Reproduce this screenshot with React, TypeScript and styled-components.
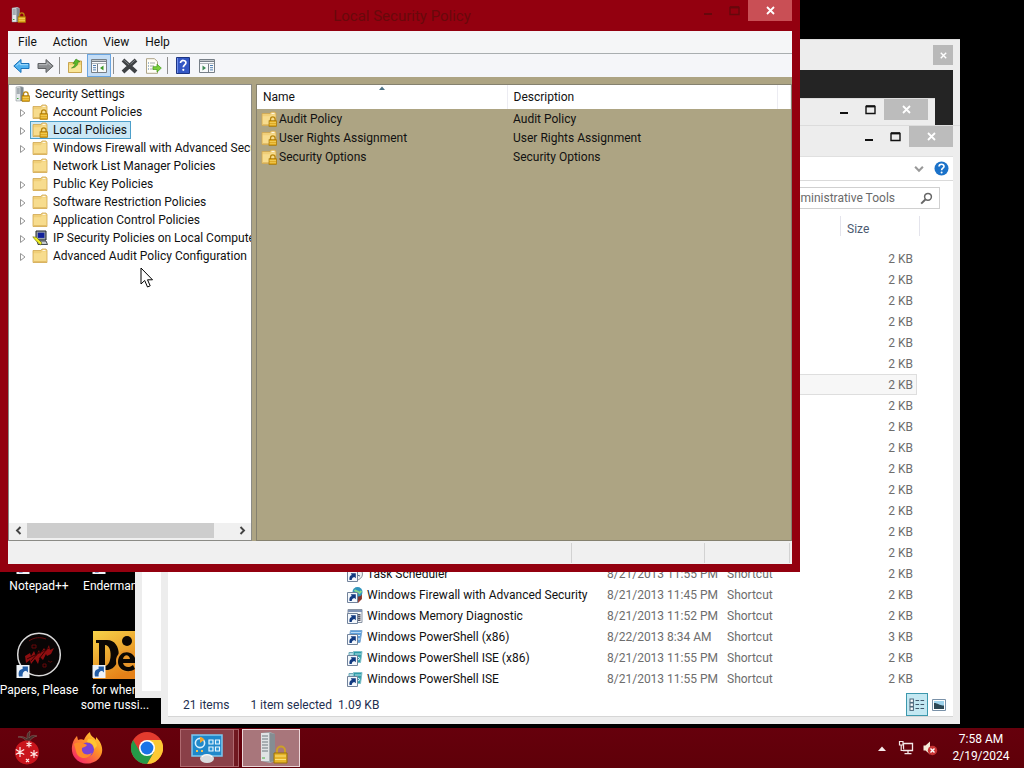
import React from "react";
import styled, { createGlobalStyle, css } from "styled-components";

const GlobalStyle = createGlobalStyle`
  *, *::before, *::after { box-sizing: border-box; }
  body { margin: 0; background: #000; }
  body, button, input, table {
    font-family: Roboto, "Open Sans", sans-serif;
    font-size: 12px;
    line-height: 16px;
  }
  button { border: 0; padding: 0; background: none; color: inherit; }
  svg { display: block; flex: none; }
`;

/* ---------- desktop ---------- */

const Screen = styled.div`
  display: flex;
  flex-direction: column;
  height: 100vh;
  overflow: hidden;
  background: #000;
`;

const Desktop = styled.main`
  position: relative;
  flex: 1;
  min-height: 0;
  overflow: hidden;
`;

const ShortcutGrid = styled.div`
  display: grid;
  grid-template-columns: repeat(2, 76px);
  grid-template-rows: repeat(7, 104px);
  padding: 7px 1px;
`;

const Shortcut = styled.button<{ $row: number; $col: number }>`
  grid-row: ${(p) => p.$row};
  grid-column: ${(p) => p.$col};
  display: flex;
  flex-direction: column;
  align-items: center;
  gap: 4px;
  align-self: start;
  color: #fff;
  line-height: 15px;
  text-align: center;
  white-space: pre;
`;

/* ---------- window frames ---------- */

type Inset = { $top: number; $right: number; $bottom: number; $left: number };

const Frame = styled.section<Inset & { $accent?: boolean }>`
  position: absolute;
  top: ${(p) => p.$top}px;
  right: ${(p) => p.$right}px;
  bottom: ${(p) => p.$bottom}px;
  left: ${(p) => p.$left}px;
  display: flex;
  flex-direction: column;
  overflow: hidden;
  padding: 0 8px 8px;
  background: ${(p) => (p.$accent ? "#93000f" : "#ededed")};
  ${(p) => !p.$accent && css`
    padding: 0 7px 7px;
    border-top: 1px solid #dcdcdc;
  `}
`;

const TitleBar = styled.header<{ $height: number }>`
  display: flex;
  flex: none;
  align-items: flex-start;
  justify-content: flex-end;
  height: ${(p) => p.$height}px;
`;

const TitleIcon = styled.div`
  flex: 1;
  padding: 7px 2px;
`;

const Title = styled.h1`
  flex: none;
  margin: 0;
  padding-top: 6px;
  font-size: 15px;
  font-weight: 400;
  line-height: 20px;
  color: #68090b;
`;

const Controls = styled.div`
  display: flex;
  flex: 1;
  justify-content: flex-end;
`;

const CaptionButton = styled.button<{ $tone?: string }>`
  display: flex;
  align-items: center;
  justify-content: center;
  width: ${(p) => (p.$tone ? 44 : 27)}px;
  height: 21px;
  background: ${(p) => p.$tone || "transparent"};
`;

const SmallClose = styled.button`
  display: flex;
  align-items: center;
  justify-content: center;
  width: 20px;
  height: 20px;
  margin-top: 5px;
  background: #b9b9b9;
`;

const Client = styled.div<{ $dark?: boolean }>`
  display: flex;
  flex: 1;
  flex-direction: column;
  min-height: 0;
  background: ${(p) => (p.$dark ? "#242424" : "#fff")};
`;

/* ---------- explorer ---------- */

const RibbonStrip = styled.div`
  display: flex;
  flex: none;
  align-items: center;
  justify-content: flex-end;
  gap: 10px;
  height: 25px;
  padding-right: 4px;
  border-top: 1px solid #e0e0e0;
  border-bottom: 1px solid #dadada;
`;

const AddressRow = styled.div`
  display: flex;
  flex: none;
  justify-content: flex-end;
  height: 35px;
  padding: 6px 13px 7px;
`;

const SearchBox = styled.label`
  display: flex;
  align-items: center;
  width: 220px;
  padding: 0 6px;
  border: 1px solid #d0d0d0;
  input {
    flex: 1;
    min-width: 0;
    padding: 0 25px 0 0;
    border: 0;
    outline: 0;
    background: none;
    color: #6a6a6a;
    text-align: right;
  }
`;

const ExplorerBody = styled.div`
  display: flex;
  flex: 1;
  min-height: 0;
  overflow: hidden;
`;

const NavPane = styled.nav`
  flex: none;
  width: 172px;
`;

const FileTable = styled.table`
  width: 580px;
  align-self: flex-start;
  table-layout: fixed;
  border-collapse: collapse;
  color: #6d6d6d;
  th { height: 32px; padding: 0; vertical-align: top; font-weight: 400; text-align: left; color: #4c5a70; }
  td { height: 21px; padding: 0 4px 0 7px; white-space: nowrap; }
`;

const HeadLabel = styled.span`
  display: block;
  height: 20px;
  padding: 5px 6px 0;
  border-left: 1px solid #e4e4ec;
  border-right: 1px solid #e4e4ec;
`;

const FileRow = styled.tr<{ $selected?: boolean }>`
  ${(p) => p.$selected && css`
    td:not(:last-child) {
      background: #f7f7f7;
      box-shadow: inset 0 1px #dedede, inset 0 -1px #dedede;
    }
    td:nth-last-child(2) {
      box-shadow: inset 0 1px #dedede, inset -1px -1px #dedede;
    }
  `}
`;

const NameCell = styled.div`
  display: flex;
  align-items: center;
  gap: 4px;
  color: #111;
`;

const SizeCell = styled.td`
  text-align: right;
`;

const ExplorerStatus = styled.footer`
  display: flex;
  flex: none;
  align-items: center;
  gap: 21px;
  height: 25px;
  padding: 1px 3px 0 15px;
  border-bottom: 1px solid #d6d6d6;
  color: #1e2f50;
`;

const StatusGroup = styled.span`
  display: flex;
  flex: 1;
  gap: 6px;
`;

const ViewButtons = styled.div`
  display: flex;
`;

const ViewButton = styled.button<{ $on?: boolean }>`
  display: flex;
  align-items: center;
  justify-content: center;
  width: 22px;
  height: 23px;
  border: 1px solid ${(p) => (p.$on ? "#3d98ad" : "transparent")};
  background: ${(p) => (p.$on ? "#c3e8f2" : "none")};
`;

/* ---------- policy console ---------- */

const MenuBar = styled.nav`
  display: flex;
  flex: none;
  height: 23px;
  padding-left: 2px;
  border-bottom: 1px solid #a9aeb0;
  background: #f5f6f7;
`;

const MenuItem = styled.button`
  padding: 0 8px;
  color: #111;
`;

const Toolbar = styled.div`
  display: flex;
  flex: none;
  align-items: center;
  height: 23px;
  padding-left: 1px;
  background: #f5f6f9;
`;

const ToolButton = styled.button<{ $on?: boolean }>`
  display: flex;
  align-items: center;
  justify-content: center;
  width: 24px;
  height: 23px;
  border: 1px solid ${(p) => (p.$on ? "#6aa5e0" : "transparent")};
  background: ${(p) => (p.$on ? "#c4ddf6" : "none")};
`;

const ToolSeparator = styled.span`
  width: 1px;
  height: 17px;
  margin: 0 3px 0 2px;
  background: #8f8f8f;
`;

const Panes = styled.div`
  display: flex;
  flex: 1;
  gap: 4px;
  min-height: 0;
  padding-top: 7px;
  background: #ada483;
`;

const TreePane = styled.div`
  display: flex;
  flex: none;
  flex-direction: column;
  width: 244px;
  border: 1px solid #8b8b86;
  background: #fff;
`;

const Tree = styled.ul`
  flex: 1;
  min-height: 0;
  margin: 0;
  padding: 0;
  overflow: hidden;
  list-style: none;
  color: #111;
`;

const TreeRow = styled.li<{ $root?: boolean }>`
  display: flex;
  align-items: center;
  height: 18px;
  padding-left: ${(p) => (p.$root ? 3 : 9)}px;
  white-space: nowrap;
`;

const Twisty = styled.span`
  width: 12px;
  flex: none;
  padding: 2px 0 0 1px;
`;

const TreeLabel = styled.span<{ $selected?: boolean }>`
  display: flex;
  align-items: center;
  gap: 5px;
  height: 18px;
  padding: 0 3px 0 1px;
  border: 1px solid ${(p) => (p.$selected ? "#4d9fca" : "transparent")};
  background: ${(p) => (p.$selected ? "#cbe8f6" : "none")};
`;

const ScrollBar = styled.div`
  display: flex;
  flex: none;
  height: 17px;
  padding-bottom: 2px;
  background: #f0f0f0;
`;

const ScrollButton = styled.button`
  display: flex;
  align-items: center;
  justify-content: center;
  width: 18px;
`;

const ScrollTrack = styled.div`
  display: flex;
  flex: 1;
`;

const ScrollThumb = styled.div`
  width: 91%;
  background: #cdcdcd;
`;

const ListPane = styled.div`
  flex: 1;
  min-width: 0;
  overflow: hidden;
  border: 1px solid #85816f;
`;

const PolicyTable = styled.table`
  width: 100%;
  table-layout: fixed;
  border-collapse: collapse;
  color: #111;
  th {
    position: relative;
    height: 24px;
    padding: 0 6px;
    border-right: 1px solid #ececf2;
    background: #fff;
    font-weight: 400;
    text-align: left;
  }
  td { height: 19px; padding: 0 6px 0 4px; }
  td + td { padding-left: 6px; }
`;

const SortMark = styled.span`
  position: absolute;
  top: 1px;
  left: 49%;
`;

const PolicyName = styled.div`
  display: flex;
  align-items: center;
  gap: 2px;
`;

const ConsoleStatus = styled.footer`
  display: flex;
  flex: none;
  height: 23px;
  padding: 2px 2px 1px 0;
  background: #f0f0f0;
`;

const StatusCell = styled.span<{ $width?: number }>`
  flex: ${(p) => (p.$width ? "none" : 1)};
  width: ${(p) => (p.$width ? p.$width + "px" : "auto")};
  border-right: 1px solid #d2d2d2;
`;

/* ---------- taskbar ---------- */

const Taskbar = styled.footer`
  display: flex;
  flex: none;
  height: 40px;
  align-items: stretch;
  background: linear-gradient(#66000c, #5f0009);
  color: #fff;
`;

const TaskButton = styled.button<{ $state?: "open" | "active" }>`
  display: flex;
  align-items: center;
  justify-content: center;
  width: 60px;
  margin: 1px 0;
  padding-right: ${(p) => (p.$state ? 0 : 6)}px;
  ${(p) => p.$state === "open" && css`
    width: 54px;
    border: 1px solid #b06a70;
    background: #8a4048;
  `}
  ${(p) => p.$state === "active" && css`
    width: 58px;
    margin-left: 3px;
    border: 1px solid #ecd6d8;
    background: #a8767b;
  `}
`;

const StackEdge = styled.span`
  width: 5px;
  margin: 1px 0;
  border: 1px solid #a65e65;
  border-left: 0;
  background: #701820;
`;

const Tray = styled.div`
  display: flex;
  align-items: center;
  gap: 6px;
  margin-left: auto;
  padding-right: 13px;
`;

const TrayButton = styled.button`
  display: flex;
  align-items: center;
  justify-content: center;
  width: 18px;
  height: 24px;
`;

const Clock = styled.time`
  width: 60px;
  margin-left: 6px;
  line-height: 17px;
  text-align: center;
  white-space: nowrap;
`;

/* ---------- drawings ---------- */

const CloseGlyph = ({ size = 9 }: { size?: number }) => (
  <svg width={size} height={size} viewBox="0 0 9 9"><path d="M1 1l7 7M8 1L1 8" stroke="#fff" strokeWidth="1.8" /></svg>
);
const MinGlyph = ({ color = "#111" }: { color?: string }) => (
  <svg width="10" height="10" viewBox="0 0 10 10"><path d="M1 8h8" stroke={color} strokeWidth="2" /></svg>
);
const MaxGlyph = ({ color = "#111" }: { color?: string }) => (
  <svg width="11" height="10" viewBox="0 0 11 10"><path d="M1 1.5h9v7H1z" fill="none" stroke={color} strokeWidth="1.4" /><path d="M1 1.2h9" stroke={color} strokeWidth="2" /></svg>
);

const Padlock = () => (
  <g>
    <path d="M9.5 10V8.2a2.3 2.3 0 0 1 4.6 0V10" fill="none" stroke="#b8860f" strokeWidth="1.3" />
    <rect x="8" y="9.7" width="7.6" height="5.8" fill="#dca51c" stroke="#9d7005" strokeWidth=".6" />
    <path d="M8.6 11.5h6.4M8.6 13.3h6.4" stroke="#f8da6a" strokeWidth=".7" />
  </g>
);

const FolderIcon = ({ locked = false }: { locked?: boolean }) => (
  <svg width="16" height="16" viewBox="0 0 16 16">
    <path d="M1 2.5h8l1-1.5h4l1 1.5v12H1z" fill="#f0cf78" stroke="#cfa650" strokeWidth=".8" />
    <path d="M1.800 5.200h6.900l1.500-1.600h4.100v10.200H1.800z" fill="#f7dc8e" />
    <path d="M1.800 13.800h12.600" stroke="#dcb65c" />
    <path d="M10.500 2.400h3" stroke="#fff" strokeWidth=".9" />
    {locked && <Padlock />}
  </svg>
);

const ServerIcon = ({ size = 16 }: { size?: number }) => (
  <svg width={size} height={size} viewBox="0 0 16 16">
    <path d="M2 1l5-1 2.500 1v14H2z" fill="#b9bfc4" />
    <path d="M2 1h4.6v14H2z" fill="#e4e8ea" stroke="#7c858b" strokeWidth=".5" />
    <path d="M2.8 3h3M2.8 5h3M2.8 7h3" stroke="#596870" strokeWidth=".9" />
    <path d="M3 12.5h1.5" stroke="#3ba53a" />
    <path d="M6.8 1l2.600.5V15H6.8z" fill="#7f898f" />
    <Padlock />
  </svg>
);

const ComputerIcon = () => (
  <svg width="16" height="16" viewBox="0 0 16 16">
    <path d="M4 1h10v9H4z" fill="#9aa3ac" stroke="#22272b" />
    <path d="M5.8 2.7h6.6v5.2H5.8z" fill="#12209a" />
    <path d="M5 11h9l1.5 3.5H6z" fill="#c8cdd1" stroke="#22272b" strokeWidth=".8" />
    <path d="M.8 6.8l3.5.5L10 13l-1.5 2L3 9.8z" fill="#f0ef22" stroke="#68680b" strokeWidth=".6" />
  </svg>
);

const ArrowIcon = ({ back = false }: { back?: boolean }) => (
  <svg width="17" height="16" viewBox="0 0 17 16">
    {back
      ? <path d="M.8 8l7.200-6.500v4h8v5H8v4z" fill="#4eb0ef" stroke="#1971b8" strokeWidth="1" />
      : <path d="M16.200 8L9 1.500v4H1v5h8v4z" fill="#8b8e90" stroke="#5f6264" strokeWidth="1" />}
    {back ? <path d="M3.5 7.6L7 4.6v2.1h8" fill="none" stroke="#a9defd" /> : <path d="M2 6.7h8V4.5l3.6 3" fill="none" stroke="#b9bcbe" />}
  </svg>
);

const UpFolderIcon = () => (
  <svg width="16" height="16" viewBox="0 0 16 16">
    <path d="M1.5 4.5h5L8 3h6.5v11.5h-13z" fill="#f1d476" stroke="#bd9437" strokeWidth=".8" />
    <path d="M2 7h12v7H2z" fill="#f8e597" />
    <path d="M4.500 10C7.500 8.500 8 6.500 8 5.200L6 5.600 9 1l4 2.700-2.100.5c0 3-2 5.400-6.400 5.800z" fill="#5ab92a" stroke="#36831a" strokeWidth=".6" />
  </svg>
);

const PaneIcon = ({ flip = false }: { flip?: boolean }) => (
  <svg width="16" height="14" viewBox="0 0 16 14">
    <path d="M.5.5h15v13H.5z" fill="#f9fafb" stroke="#777f87" />
    <path d="M1 2.3h14" stroke="#777f87" strokeWidth="1.4" />
    <path d="M1 4.5h14" stroke="#9aa2aa" strokeWidth=".8" />
    <path d={flip ? "M9.5 5v8" : "M6.5 5v8"} stroke="#777f87" />
    <path d={flip ? "M11 6.5h3M11 8.7h3M11 10.9h3" : "M2 6.5h3M2 8.7h3M2 10.9h3"} stroke="#507fb2" />
    <path d={flip ? "M3.5 6.5v5l3.5-2.5z" : "M12.5 6.5v5L9 9z"} fill={flip ? "#3f8a55" : "#3c9a28"} />
  </svg>
);

const DeleteIcon = () => (
  <svg width="17" height="16" viewBox="0 0 17 16"><path d="M2 2l13 12M15 2L2 14" stroke="#3f4245" strokeWidth="4" /><path d="M2 1.500l6 5.200M9.500 6.200l5-4.500" stroke="#83888b" strokeWidth=".9" /></svg>
);

const ExportIcon = () => (
  <svg width="17" height="16" viewBox="0 0 17 16">
    <path d="M1.5.7h8l3 3v11.6h-11z" fill="#fffef6" stroke="#a59a7c" strokeWidth=".9" />
    <path d="M3 5h1M3 8h1M3 11h1" stroke="#4b72a8" />
    <path d="M5 5h5M5 8h4M5 11h4" stroke="#8e9599" strokeWidth=".8" />
    <path d="M8 8.7h4V6.2l4.3 3.9-4.3 4v-2.6H8z" fill="#7bd03a" stroke="#3f9919" strokeWidth=".7" />
  </svg>
);

const HelpIcon = () => (
  <svg width="14" height="17" viewBox="0 0 14 17">
    <path d="M.5.5h13v16H.5z" fill="#3457c4" stroke="#1d3583" />
    <path d="M1.5 1v15" stroke="#7290ea" />
    <path d="M4.5 6c0-3.5 5.7-3.2 5.4-.1-.2 2-2.6 2-2.6 4.4" fill="none" stroke="#fff" strokeWidth="1.7" /><circle cx="7.3" cy="12.8" r="1.1" fill="#fff" />
  </svg>
);

const RoundHelpIcon = () => (
  <svg width="15" height="15" viewBox="0 0 15 15">
    <circle cx="7.5" cy="7.5" r="7" fill="#1b72c9" />
    <path d="M5 5.6c.1-3.2 5.2-2.9 5 0-.2 1.6-2.4 1.7-2.4 3.6" fill="none" stroke="#fff" strokeWidth="1.6" /><circle cx="7.6" cy="11.5" r="1" fill="#fff" />
  </svg>
);

const TwistyIcon = () => (
  <svg width="8" height="10" viewBox="0 0 8 10"><path d="M1.5 1.5v7L6 5z" fill="#fff" stroke="#969696" /></svg>
);

const Chevron = ({ d, size = 9, color = "#444" }: { d: string; size?: number; color?: string }) => (
  <svg width={size} height={size} viewBox="0 0 9 9"><path d={d} fill="none" stroke={color} strokeWidth="1.9" /></svg>
);

const MagnifierIcon = () => (
  <svg width="13" height="13" viewBox="0 0 13 13"><circle cx="8" cy="4.8" r="3.4" fill="none" stroke="#666" strokeWidth="1.5" /><path d="M5.6 7.3L1.2 11.6" stroke="#666" strokeWidth="2" /></svg>
);

const ShortcutArrow = () => (
  <g>
    <path d="M.5 5.500h10v10h-10z" fill="#f4f8fc" stroke="#72839b" />
    <path d="M2.500 14c-.5-3 .6-4.700 2.300-5L3.700 7.300h5.100v5L7.200 10.900C5.500 11.300 5 12.200 4.700 14z" fill="#123a80" />
  </g>
);

const LinkIcon = ({ kind }: { kind: string }) => (
  <svg width="16" height="16" viewBox="0 0 16 16">
    {kind === "task" && <><circle cx="9.5" cy="8" r="6" fill="#eef1f2" stroke="#8c9499" /><path d="M10 4v5l3 1" fill="none" stroke="#506b85" /></>}
    {kind === "wall" && <><path d="M9 6h6v6l-4 4H9z" fill="#9a4035" /><circle cx="10.500" cy="5" r="5" fill="#2f94bd" /><path d="M7.500 3c2 2 3 0 5 3l2-2" stroke="#86d68b" strokeWidth="1.8" fill="none" /><path d="M10 10h4M10 12h4" stroke="#51261f" strokeWidth=".7" /></>}
    {kind === "memory" && <><path d="M1 1.5h14v13H1z" fill="#eff2f5" stroke="#8a94a3" /><path d="M1 3h14" stroke="#8093b5" strokeWidth="2" /><path d="M11 6h2.500v7H11z" fill="#556" /><path d="M10 7.5h4M10 9.5h4M10 11.5h4" stroke="#c9d0d5" strokeWidth=".6" /></>}
    {kind === "shell" && <><path d="M3.5 1.5H15l-2 12H1.5z" fill="#5b9edb" stroke="#7da9d4" /><path d="M4 3.5h10" stroke="#b6d8f5" /><path d="M11 6.5h2M11 10h2" stroke="#d9ecfb" /></>}
    {kind === "ise" && <><path d="M2 2.5h9v9H2z" fill="#b2dce4" stroke="#6fa8b8" /><path d="M6.5 1.5H15l-1.5 11H6z" fill="#2f9ba8" stroke="#7fc0c9" /><path d="M8 4h6" stroke="#b6e7ec" /><path d="M11 7l2 1.5-2 1.5" stroke="#d9f6fb" fill="none" /></>}
    <ShortcutArrow />
  </svg>
);

const DetailsIcon = () => (
  <svg width="16" height="14" viewBox="0 0 16 14">
    {[1, 5, 9].map((y) => <g key={y}><rect x="1" y={y} width="3.4" height="3.4" fill="#fff" stroke="#4a6478" /><path d={`M6.5 ${y + 1.5}h3.6M11.5 ${y + 1.5}h3.6`} stroke="#41586b" strokeWidth="1.2" /></g>)}
  </svg>
);

const ThumbIcon = () => (
  <svg width="14" height="12" viewBox="0 0 14 12"><path d="M.5.5h13v11H.5z" fill="#fff" stroke="#7991a8" /><path d="M2 2h10v5H2z" fill="#9ed3ec" /><path d="M2 4c4 0 5 2.5 10 2.5V10H2z" fill="#2d4855" /></svg>
);

const BigLinkBadge = () => (
  <g>
    <path d="M1.5 34h13v13h-13z" fill="#eef3f8" />
    <path d="M4 45.5c-1-4.8.4-7.3 3.6-7.6V35.5h5.3v6l-1.8-1.7C8.2 40.2 7.3 42 7.6 45.5z" fill="#235da5" />
  </g>
);

const DesktopIcon = ({ kind }: { kind: "plain" | "papers" | "deadly" }) => (
  <svg width="48" height="48" viewBox="0 0 48 48">
    {kind === "papers" && <>
      <circle cx="24" cy="23.5" r="21.3" fill="#090505" stroke="#d9d9d9" strokeWidth="1.5" />
      <path d="M10 25l5-3 1 3 3-5 2 5 3-6 1 4 4-6 2 3 3-6 1 5 4-2-3 6-4 2-1-2-3 6-3-3-2 7-3-5-4 5-1-4-4 3z" fill="#8e0e10" />
      <path d="M17 14h4v3h-4zM28 33h3v3h-3zM14 10c5-4 12-4 17-2M33 30c2 1 3 2 4 0" fill="none" stroke="#64090b" />
      <path d="M12 28l22-11M16 30l8-9M24 28l7-9" stroke="#330203" />
    </>}
    {kind === "deadly" && <>
      <defs><linearGradient id="amber" x1="0" y1="0" x2="0.5" y2="1"><stop stopColor="#f6d34a" /><stop offset="1" stopColor="#e58118" /></linearGradient></defs>
      <path d="M2 0h46v48H2z" fill="url(#amber)" />
      <path fillRule="evenodd" d="M5 9h11c16 0 15 28 1 30H5v-3h3V12H5zM14 14v21c7 0 8-21 0-21z" fill="#0c0703" />
      <circle cx="36" cy="10" r="5" fill="#0c0703" />
      <circle cx="36" cy="30" r="11" fill="#e9962a" />
      <path fillRule="evenodd" d="M45 32H32c1 5 7 5 10 2l2 4c-7 5-17 1-17-7 0-13 18-13 18 1zM32 28h7c-1-5-6-5-7 0z" fill="#0c0703" />
    </>}
    <BigLinkBadge />
  </svg>
);

const BaubleIcon = () => (
  <svg width="30" height="36" viewBox="0 0 30 36">
    <path d="M15 13c-1-4-5-6-9-6 4-1 7 0 9 2 0-4 0-6 3-8 0 3-1 5-1 7 2-3 5-3 8-2-4 1-7 3-8 7z" fill="#4a2f2b" stroke="#7a5d57" strokeWidth=".7" />
    <circle cx="15" cy="22.5" r="12" fill="#c9141c" />
    <path d="M8 17v10M3.800 19.500l8.400 5M12.200 19.500l-8.400 5M17 11.500v6M14.500 13l5 3M19.500 13l-5 3M22 20v8M18.500 22l7 4M25.500 22l-7 4M14 29l3 3M17 29l-3 3" stroke="#ffe9e6" strokeWidth="1.200" />
  </svg>
);

const FirefoxIcon = () => (
  <svg width="32" height="32" viewBox="0 0 32 32">
    <defs><linearGradient id="flame" x1="1" y1="0" x2="0.2" y2="1"><stop stopColor="#ffe63b" /><stop offset=".45" stopColor="#ff9226" /><stop offset="1" stopColor="#f4226b" /></linearGradient></defs>
    <path d="M3 8c1-2 2-3 3-4l1 4c2-1 4-1 6 0 1-3 3-6 6-8 0 4 4 5 6 8V5c8 8 7 16 4 20-5 8-19 9-25 1C0 21 0 14 3 8z" fill="url(#flame)" />
    <circle cx="16" cy="17.5" r="7" fill="#7b43d4" />
    <path d="M3 12c5-3 9-1 13 1-1 2-4 2-5 3-1 6 5 8 10 5-4 8-15 6-16-2z" fill="#ff8a2a" />
    <path d="M16 10c4 0 7 3 7 7l3-3c0-5-5-8-9-7z" fill="#ffc531" />
  </svg>
);

const ChromeIcon = () => (
  <svg width="32" height="32" viewBox="0 0 32 32">
    <circle cx="16" cy="16" r="16" fill="#e33b2e" />
    <path d="M29.900 8A16 16 0 0 1 16 32l6.900-12L16 8z" fill="#fcc934" />
    <path d="M2.100 8A16 16 0 0 0 16 32l6.900-12H9.100z" fill="#259a48" />
    <circle cx="16" cy="16" r="8" fill="#fff" /><circle cx="16" cy="16" r="6.4" fill="#1a73e8" />
  </svg>
);

const ControlPanelIcon = () => (
  <svg width="34" height="30" viewBox="0 0 34 30">
    <path d="M2 2h30v21H2z" fill="#2088ca" stroke="#7dc7ee" strokeWidth="1.5" />
    <circle cx="10" cy="10" r="4.6" fill="none" stroke="#d8effc" strokeWidth="1.6" /><path d="M10 10V3.8a6 6 0 0 1 4.5 3z" fill="#f3a52c" />
    <path d="M19 7h4v4h-4zM25.5 7h4v4h-4zM19 14h4v4h-4zM25.5 14h4v4h-4z" fill="#2b95d6" stroke="#e6f5fd" strokeWidth="1.2" />
    <path d="M6 18h2M11 18h2" stroke="#f2c354" strokeWidth="2" />
    <ellipse cx="17" cy="25.5" rx="7" ry="4.5" fill="#d9dcde" /><path d="M12 24c3-3 7-3 10 0" stroke="#fff" fill="none" />
  </svg>
);

const TaskServerIcon = () => (
  <svg width="34" height="34" viewBox="0 0 34 34">
    <path d="M7 2l9-1 5 2v27l-5 2-9-2z" fill="#a6adb1" />
    <path d="M7 2h8v28H7z" fill="#dfe3e5" />
    <path d="M8 5h6M8 8h6M8 11h6M8 14h6M8 17h6M8 20h6" stroke="#6f7a80" strokeWidth="1.2" />
    <path d="M16 2l5 1v27l-5 1z" fill="#858d92" /><path d="M8 27h3" stroke="#4bb048" />
    <path d="M23 23v-3.5a4 4 0 0 1 8 0V23" fill="none" stroke="#cda027" strokeWidth="2" />
    <path d="M20 22h13v10H20z" fill="#e6b42a" stroke="#9b7208" /><path d="M21 25h11M21 28.5h11" stroke="#fbe27a" />
  </svg>
);

const NetworkIcon = () => (
  <svg width="16" height="16" viewBox="0 0 16 16">
    <path d="M5.5 3.5h9v7h-9zM10 10.5v3M6.5 13.7h7" fill="none" stroke="#f3e6e7" strokeWidth="1.3" />
    <path d="M1.5 1.5h3.5v3.5H1.5zM3.2 5v5.5H6" fill="#5f0009" stroke="#f3e6e7" strokeWidth="1.2" />
  </svg>
);

const SpeakerIcon = () => (
  <svg width="16" height="16" viewBox="0 0 16 16">
    <path d="M1.5 5.5h2L8 1.5v13l-4.500-4h-2z" fill="#f6ecd9" />
    <circle cx="10.5" cy="10.5" r="4.7" fill="#c93434" /><path d="M8.5 8.5l4 4M12.5 8.5l-4 4" stroke="#fff" strokeWidth="1.4" />
  </svg>
);

const Pointer = styled.svg`
  position: absolute;
  left: 140px;
  top: 267px;
  pointer-events: none;
`;

/* ---------- data ---------- */

type FileItem = { name?: string; kind?: string; date?: string; type?: string; size: string; selected?: boolean };

const files: FileItem[] = [
  ...Array.from({ length: 15 }, (_, i) => ({ size: "2 KB", selected: i === 6 })),
  { name: "Task Scheduler", kind: "task", date: "8/21/2013 11:55 PM", type: "Shortcut", size: "2 KB" },
  { name: "Windows Firewall with Advanced Security", kind: "wall", date: "8/21/2013 11:45 PM", type: "Shortcut", size: "2 KB" },
  { name: "Windows Memory Diagnostic", kind: "memory", date: "8/21/2013 11:52 PM", type: "Shortcut", size: "2 KB" },
  { name: "Windows PowerShell (x86)", kind: "shell", date: "8/22/2013 8:34 AM", type: "Shortcut", size: "3 KB" },
  { name: "Windows PowerShell ISE (x86)", kind: "ise", date: "8/21/2013 11:55 PM", type: "Shortcut", size: "2 KB" },
  { name: "Windows PowerShell ISE", kind: "ise", date: "8/21/2013 11:55 PM", type: "Shortcut", size: "2 KB" },
];

const treeItems = [
  { label: "Account Policies", icon: "locked" },
  { label: "Local Policies", icon: "locked", selected: true },
  { label: "Windows Firewall with Advanced Security", icon: "folder" },
  { label: "Network List Manager Policies", icon: "folder", leaf: true },
  { label: "Public Key Policies", icon: "folder" },
  { label: "Software Restriction Policies", icon: "folder" },
  { label: "Application Control Policies", icon: "folder" },
  { label: "IP Security Policies on Local Computer", icon: "computer" },
  { label: "Advanced Audit Policy Configuration", icon: "folder" },
];

const policies = ["Audit Policy", "User Rights Assignment", "Security Options"];

/* ---------- windows ---------- */

const WindowControls = ({ tone, glyph }: { tone: string; glyph?: string }) => (
  <Controls>
    <CaptionButton aria-label="Minimize"><MinGlyph color={glyph} /></CaptionButton>
    <CaptionButton aria-label="Maximize"><MaxGlyph color={glyph} /></CaptionButton>
    <CaptionButton aria-label="Close" $tone={tone}><CloseGlyph /></CaptionButton>
  </Controls>
);

const ExplorerWindow = () => (
  <Frame $top={125} $right={64} $bottom={4} $left={161}>
    <TitleBar $height={30}><WindowControls tone="#bcbcbc" /></TitleBar>
    <Client>
      <RibbonStrip>
        <button aria-label="Expand ribbon"><Chevron d="M1 2.5l3.5 3.5L8 2.5" size={10} color="#999" /></button>
        <button aria-label="Help"><RoundHelpIcon /></button>
      </RibbonStrip>
      <AddressRow>
        <SearchBox>
          <input aria-label="Search" defaultValue="Search Administrative Tools" />
          <MagnifierIcon />
        </SearchBox>
      </AddressRow>
      <ExplorerBody>
        <NavPane aria-label="Navigation" />
        <FileTable>
          <colgroup><col width="260" /><col width="120" /><col width="120" /><col width="77" /><col width="3" /></colgroup>
          <thead><tr><th /><th /><th /><th colSpan={2}><HeadLabel>Size</HeadLabel></th></tr></thead>
          <tbody>
            {files.map((f, i) => (
              <FileRow key={i} $selected={f.selected}>
                <td>{f.name && <NameCell><LinkIcon kind={f.kind!} />{f.name}</NameCell>}</td>
                <td>{f.date}</td>
                <td>{f.type}</td>
                <SizeCell>{f.size}</SizeCell>
                <td />
              </FileRow>
            ))}
          </tbody>
        </FileTable>
      </ExplorerBody>
      <ExplorerStatus>
        <span>21 items</span>
        <StatusGroup><span>1 item selected</span><span>1.09 KB</span></StatusGroup>
        <ViewButtons>
          <ViewButton $on aria-label="Details view"><DetailsIcon /></ViewButton>
          <ViewButton aria-label="Thumbnail view"><ThumbIcon /></ViewButton>
        </ViewButtons>
      </ExplorerStatus>
    </Client>
  </Frame>
);

const PolicyWindow = () => (
  <Frame $accent $top={0} $right={224} $bottom={156} $left={0}>
    <TitleBar $height={31}>
      <TitleIcon><ServerIcon /></TitleIcon>
      <Title>Local Security Policy</Title>
      <WindowControls tone="#c94f55" glyph="#66080c" />
    </TitleBar>
    <Client>
      <MenuBar>
        {["File", "Action", "View", "Help"].map((m) => <MenuItem key={m}>{m}</MenuItem>)}
      </MenuBar>
      <Toolbar>
        <ToolButton aria-label="Back"><ArrowIcon back /></ToolButton>
        <ToolButton aria-label="Forward"><ArrowIcon /></ToolButton>
        <ToolSeparator />
        <ToolButton aria-label="Up one level"><UpFolderIcon /></ToolButton>
        <ToolButton $on aria-label="Show or hide tree"><PaneIcon /></ToolButton>
        <ToolSeparator />
        <ToolButton aria-label="Delete"><DeleteIcon /></ToolButton>
        <ToolButton aria-label="Export list"><ExportIcon /></ToolButton>
        <ToolSeparator />
        <ToolButton aria-label="Help"><HelpIcon /></ToolButton>
        <ToolButton aria-label="Show or hide action pane"><PaneIcon flip /></ToolButton>
      </Toolbar>
      <Panes>
        <TreePane>
          <Tree>
            <TreeRow $root><TreeLabel><ServerIcon />Security Settings</TreeLabel></TreeRow>
            {treeItems.map((t) => (
              <TreeRow key={t.label}>
                <Twisty>{!t.leaf && <TwistyIcon />}</Twisty>
                <TreeLabel $selected={t.selected}>
                  {t.icon === "computer" ? <ComputerIcon /> : <FolderIcon locked={t.icon === "locked"} />}
                  {t.label}
                </TreeLabel>
              </TreeRow>
            ))}
          </Tree>
          <ScrollBar>
            <ScrollButton aria-label="Scroll left"><Chevron d="M6.5 1L3 4.5 6.5 8" /></ScrollButton>
            <ScrollTrack><ScrollThumb /></ScrollTrack>
            <ScrollButton aria-label="Scroll right"><Chevron d="M2.5 1L6 4.5 2.5 8" /></ScrollButton>
          </ScrollBar>
        </TreePane>
        <ListPane>
          <PolicyTable>
            <colgroup><col width="250" /><col /><col width="13" /></colgroup>
            <thead>
              <tr>
                <th>Name<SortMark><svg width="6" height="4" viewBox="0 0 6 4"><path d="M0 4l3-3.5L6 4z" fill="#4d7285" /></svg></SortMark></th>
                <th>Description</th>
                <th />
              </tr>
            </thead>
            <tbody>
              {policies.map((p) => (
                <tr key={p}>
                  <td><PolicyName><FolderIcon locked />{p}</PolicyName></td>
                  <td>{p}</td>
                  <td />
                </tr>
              ))}
            </tbody>
          </PolicyTable>
        </ListPane>
      </Panes>
      <ConsoleStatus><StatusCell /><StatusCell $width={133} /><StatusCell $width={85} /></ConsoleStatus>
    </Client>
  </Frame>
);

export default function App() {
  return (
    <Screen>
      <GlobalStyle />
      <Desktop>
        <ShortcutGrid>
          <Shortcut $row={6} $col={1}><DesktopIcon kind="plain" />Notepad++</Shortcut>
          <Shortcut $row={6} $col={2}><DesktopIcon kind="plain" />Enderman...</Shortcut>
          <Shortcut $row={7} $col={1}><DesktopIcon kind="papers" />Papers, Please</Shortcut>
          <Shortcut $row={7} $col={2}><DesktopIcon kind="deadly" />{"for when\nsome russi..."}</Shortcut>
        </ShortcutGrid>
        <Frame $top={39} $right={64} $bottom={44} $left={190}>
          <TitleBar $height={30}><SmallClose aria-label="Close"><CloseGlyph size={7} /></SmallClose></TitleBar>
          <Client $dark />
        </Frame>
        <Frame $top={98} $right={89} $bottom={30} $left={135}>
          <TitleBar $height={30}><WindowControls tone="#bcbcbc" /></TitleBar>
          <Client />
        </Frame>
        <ExplorerWindow />
        <PolicyWindow />
        <Pointer width="14" height="22" viewBox="0 0 14 22"><path d="M1 1v16l3.7-3.5L7.5 20l2.7-1.2-2.7-6h5z" fill="#fff" stroke="#000" /></Pointer>
      </Desktop>
      <Taskbar>
        <TaskButton aria-label="Start"><BaubleIcon /></TaskButton>
        <TaskButton aria-label="Firefox"><FirefoxIcon /></TaskButton>
        <TaskButton aria-label="Chrome"><ChromeIcon /></TaskButton>
        <TaskButton $state="open" aria-label="Control Panel"><ControlPanelIcon /></TaskButton>
        <StackEdge />
        <TaskButton $state="active" aria-label="Local Security Policy"><TaskServerIcon /></TaskButton>
        <Tray>
          <TrayButton aria-label="Show hidden icons"><svg width="8" height="5" viewBox="0 0 8 5"><path d="M0 5l4-4.5L8 5z" fill="#f7e9ea" /></svg></TrayButton>
          <TrayButton aria-label="Network"><NetworkIcon /></TrayButton>
          <TrayButton aria-label="Volume"><SpeakerIcon /></TrayButton>
          <Clock>7:58 AM<br />2/19/2024</Clock>
        </Tray>
      </Taskbar>
    </Screen>
  );
}
